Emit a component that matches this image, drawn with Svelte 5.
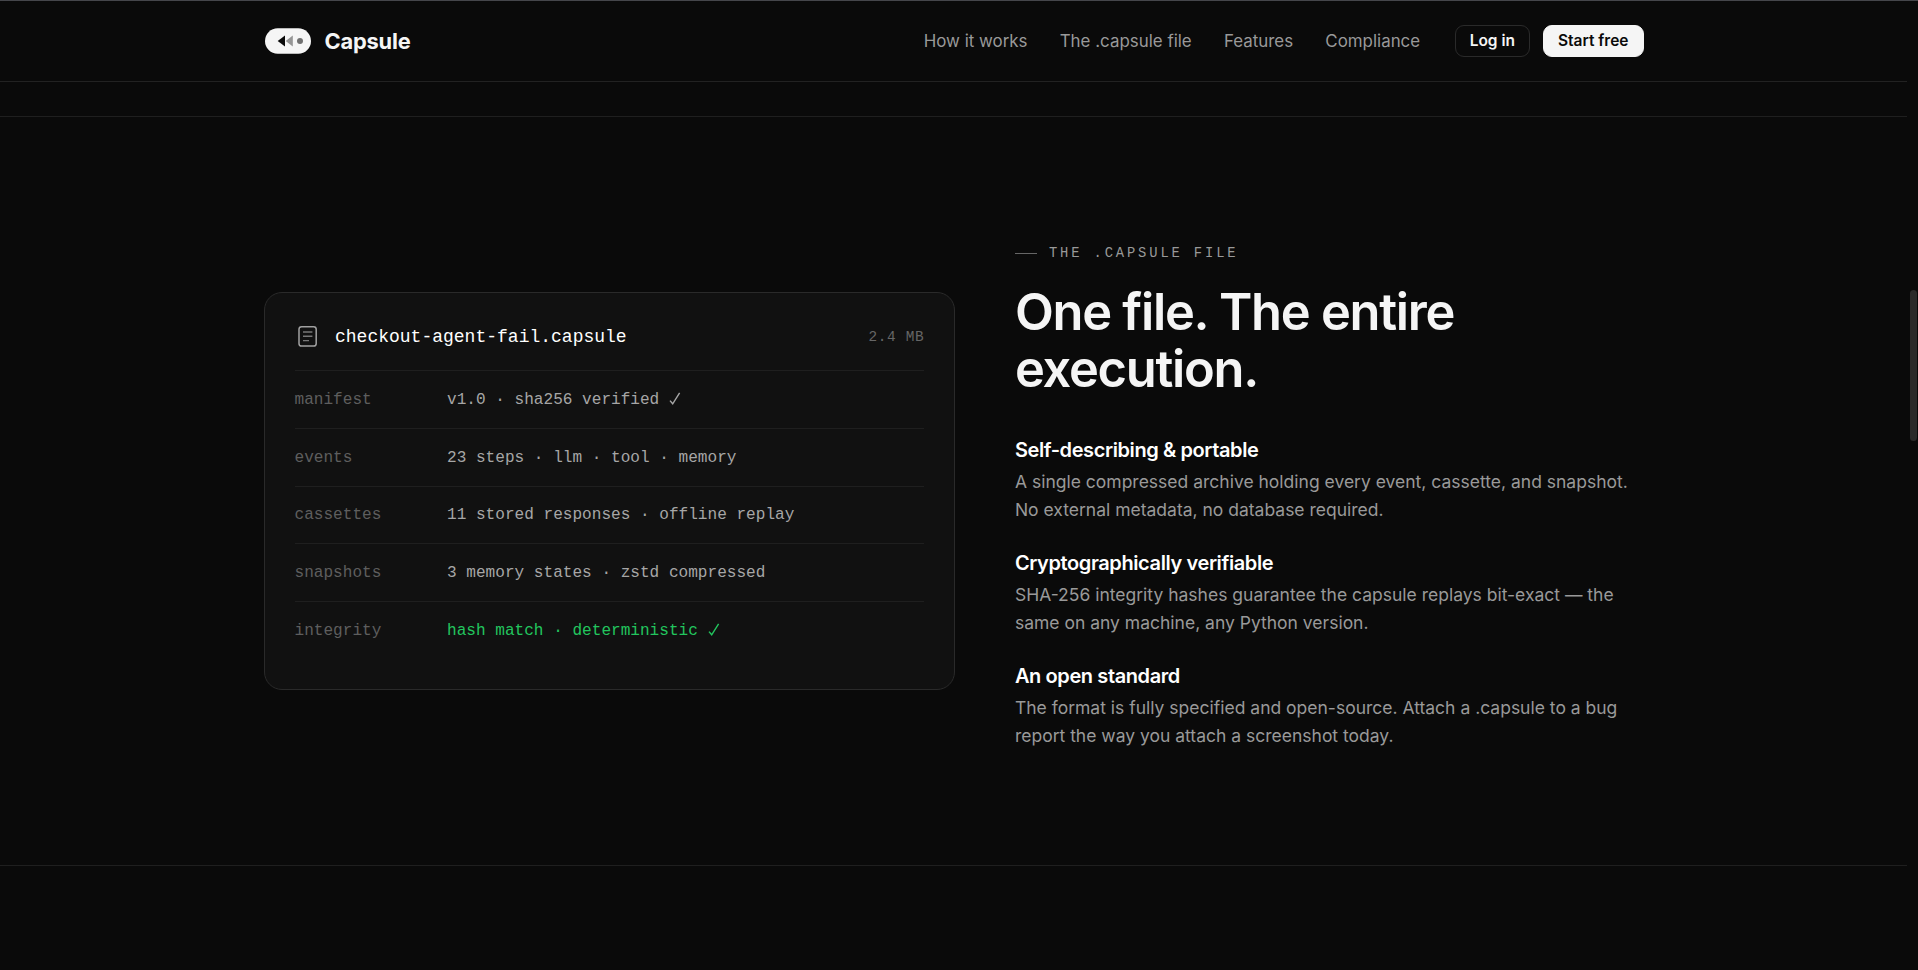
<script lang="ts">
	const links = ['How it works', 'The .capsule file', 'Features', 'Compliance'];

	const rows = [
		{ key: 'manifest', value: 'v1.0 · sha256 verified', check: true },
		{ key: 'events', value: '23 steps · llm · tool · memory' },
		{ key: 'cassettes', value: '11 stored responses · offline replay' },
		{ key: 'snapshots', value: '3 memory states · zstd compressed' },
		{ key: 'integrity', value: 'hash match · deterministic', check: true, ok: true }
	];

	const points = [
		{
			title: 'Self-describing & portable',
			lines: [
				'A single compressed archive holding every event, cassette, and snapshot.',
				'No external metadata, no database required.'
			]
		},
		{
			title: 'Cryptographically verifiable',
			lines: [
				'SHA-256 integrity hashes guarantee the capsule replays bit-exact — the',
				'same on any machine, any Python version.'
			]
		},
		{
			title: 'An open standard',
			lines: [
				'The format is fully specified and open-source. Attach a .capsule to a bug',
				'report the way you attach a screenshot today.'
			]
		}
	];
</script>

<div class="page">
	<div class="content">
		<header>
			<div class="wrap bar">
				<a class="brand" href="#top">
					<svg width="46" height="26" viewBox="0 0 46 26" aria-hidden="true">
						<rect y="0.3" width="46" height="25.4" rx="12.7" fill="#f5f5f5" />
						<path d="M20 7.5v11L12.7 13z" fill="#0a0a0a" />
						<path d="M27.8 7.5v11L20.7 13z" fill="#959595" />
						<circle cx="35" cy="13" r="3" fill="#707070" />
					</svg>
					<span>Capsule</span>
				</a>
				<nav>
					{#each links as link}
						<a href="#section">{link}</a>
					{/each}
				</nav>
				<div class="actions">
					<button class="btn" type="button">Log in</button>
					<button class="btn primary" type="button">Start free</button>
				</div>
			</div>
		</header>

		<div class="spacer"></div>

		<section>
			<div class="wrap grid">
				<div class="card">
					<div class="card-head">
						<svg width="26" height="26" viewBox="0 0 26 26" fill="none" aria-hidden="true">
							<rect x="4" y="3.7" width="17.2" height="19.4" rx="2.6" stroke="#a1a1a1" stroke-width="1.5" />
							<path d="M8 9h9.4M8 13.3h9.4M8 17.6h6" stroke="#777" stroke-width="1.4" />
						</svg>
						<span class="file">checkout-agent-fail.capsule</span>
						<span class="size">2.4 MB</span>
					</div>
					{#each rows as row (row.key)}
						<div class="row" class:ok={row.ok}>
							<span class="key">{row.key}</span>
							<span class="value">{row.value}</span>
							{#if row.check}
								<svg class="check" width="12" height="13" viewBox="0 0 12 13" role="img" aria-label="verified">
									<path d="M1 8.6l2.7 3.2L10.6 0.8" fill="none" stroke="currentColor" stroke-width="1.4" />
								</svg>
							{/if}
						</div>
					{/each}
				</div>

				<div class="copy">
					<div class="eyebrow">The .capsule file</div>
					<h2>One file. The entire<br />execution.</h2>
					{#each points as point (point.title)}
						<div class="point">
							<h3>{point.title}</h3>
							<p>{point.lines[0]}<br />{point.lines[1]}</p>
						</div>
					{/each}
				</div>
			</div>
		</section>
	</div>
	<div class="scrollbar"><div class="thumb"></div></div>
</div>

<style>
	:global(body) {
		background: #0a0a0a;
	}

	.page {
		display: flex;
		height: 970px;
		overflow: hidden;
		box-sizing: border-box;
		border-top: 1px solid #45464b;
		background: #0a0a0a;
		color: #f5f5f5;
		font-family: Inter, sans-serif;
	}

	.content {
		flex: 1;
	}

	.wrap {
		width: 1380px;
		margin: 0 auto;
	}

	header {
		height: 80px;
		border-bottom: 1px solid #222;
	}

	.bar {
		display: flex;
		align-items: center;
		height: 80px;
	}

	.brand {
		display: flex;
		align-items: center;
		gap: 14px;
		margin-left: 1px;
		color: inherit;
		text-decoration: none;
		font-size: 21.85px;
		font-weight: 650;
		letter-spacing: -0.2px;
	}

	nav {
		display: flex;
		gap: 32.2px;
		margin-left: auto;
	}

	nav a {
		color: #999;
		font-size: 16.92px;
		text-decoration: none;
		white-space: nowrap;
	}

	.actions {
		display: flex;
		gap: 13px;
		margin-left: 34.5px;
	}

	.btn {
		height: 32px;
		box-sizing: border-box;
		padding: 0 14px 1px;
		border: 1px solid #2a2a2a;
		border-radius: 9px;
		background: transparent;
		color: #f5f5f5;
		font: 600 15.5px Inter, sans-serif;
	}

	.primary {
		border-color: #f5f5f5;
		background: #f5f5f5;
		color: #0a0a0a;
	}

	.spacer {
		height: 34px;
		border-bottom: 1px solid #1f1f1f;
	}

	section {
		height: 748px;
		border-bottom: 1px solid #1f1f1f;
	}

	.grid {
		display: grid;
		grid-template-columns: 1.1fr 1fr;
		gap: 60px;
		align-items: center;
		height: 748px;
	}

	.card {
		padding: 30px;
		border: 1px solid #2a2a2a;
		border-radius: 18px;
		background: #111;
		font-family: 'Liberation Mono', monospace;
	}

	.card-head {
		display: flex;
		align-items: flex-start;
		height: 47px;
	}

	.file {
		margin-left: 14.5px;
		color: #fff;
		font-size: 18px;
		line-height: 28px;
	}

	.size {
		margin-left: auto;
		margin-right: -0.5px;
		color: #666;
		font-size: 14.4px;
		letter-spacing: 0.7px;
		line-height: 28px;
	}

	.row {
		display: flex;
		align-items: center;
		height: 55.2px;
		padding-top: 1.5px;
		border-top: 1px solid #1f1f1f;
		color: #a6a6a6;
		font-size: 16.08px;
		line-height: 21px;
	}

	.key {
		width: 152.5px;
		color: #5e5e5e;
	}

	.check {
		margin: 0 0 3px 9.8px;
	}

	.ok .value,
	.ok .check {
		color: #22c55e;
	}

	.copy {
		padding-top: 11px;
	}

	.eyebrow {
		display: flex;
		align-items: center;
		gap: 12px;
		color: #999;
		font-family: 'Liberation Mono', monospace;
		font-size: 13.8px;
		letter-spacing: 2.87px;
		line-height: 20px;
		text-transform: uppercase;
	}

	.eyebrow::before {
		content: '';
		width: 22px;
		height: 1px;
		background: #666;
	}

	h2 {
		margin: 19px 0 39px;
		font-size: 50.6px;
		font-weight: 600;
		letter-spacing: -1.27px;
		line-height: 57px;
	}

	h3 {
		margin: 0 0 4px;
		color: #fff;
		font-size: 20px;
		font-weight: 600;
		letter-spacing: -0.4px;
		line-height: 28px;
	}

	.point + .point {
		margin-top: 25px;
	}

	p {
		margin: 0;
		color: #999;
		font-size: 17.5px;
		line-height: 28px;
		white-space: nowrap;
	}

	.scrollbar {
		width: 11px;
	}

	.thumb {
		width: 7px;
		height: 151px;
		margin: 289px 0 0 3px;
		border-radius: 4px;
		background: #2a2a2a;
	}
</style>
